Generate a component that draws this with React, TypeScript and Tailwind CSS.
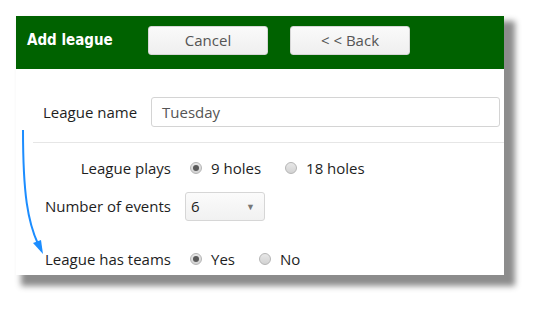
import React from 'react';

const BODY_FONT = { fontFamily: '"Open Sans", "Segoe UI", sans-serif' };

function Radio({ checked, label, className = '' }: { checked?: boolean; label: string; className?: string }) {
  return (
    <span className={`flex items-center ${className}`}>
      <span className="w-[12px] h-[12px] rounded-full border border-[#b5b5b5] bg-gradient-to-b from-[#e8e8e8] to-[#d2d2d2] flex items-center justify-center">
        {checked && <span className="w-[6px] h-[6px] rounded-full bg-[#5a5a5a]" />}
      </span>
      <span className="ml-[9px] text-[15px] text-[#1e1e1e]">{label}</span>
    </span>
  );
}

function HeaderButton({ children, className = '' }: { children: React.ReactNode; className?: string }) {
  return (
    <button className={`w-[120px] h-[29px] rounded-[3px] border border-[#d6d6d6] bg-gradient-to-b from-[#fafafa] to-[#efefef] text-[15px] text-[#555] ${className}`}>
      {children}
    </button>
  );
}

export default function App() {
  return (
    <div className="relative w-[538px] h-[309px] bg-white overflow-hidden" style={BODY_FONT}>
      <div className="ml-[16px] mt-[16px] w-[488px] bg-white shadow-[8px_8px_6px_3px_#8c8c8c]">
        {/* header */}
        <div className="h-[53px] bg-[#006200] flex items-start pt-[10px] pl-[11px]">
          <div
            className="h-[29px] flex items-center text-white font-bold text-[15px] w-[121px]"
            style={{ fontFamily: '"DejaVu Sans Condensed", Tahoma, sans-serif' }}
          >
            Add league
          </div>
          <HeaderButton>Cancel</HeaderButton>
          <HeaderButton className="ml-[22px]">&lt; &lt; Back</HeaderButton>
        </div>

        {/* body */}
        <div className="pt-[28px] pb-[6px]">
          <div className="flex items-center pl-[27px] pr-[4px]">
            <span className="text-[15px] text-[#1e1e1e] w-[108px]">League name</span>
            <div className="flex-1 h-[30px] border border-[#d4d4d4] rounded-[3px] flex items-center px-[10px] text-[15px] text-[#555]">
              Tuesday
            </div>
          </div>

          <div className="ml-[17px] mt-[15px] border-t border-[#e6e6e6]" />

          <div className="mt-[15px] h-[20px] flex items-center">
            <span className="w-[155px] text-right text-[15px] text-[#1e1e1e]">League plays</span>
            <Radio checked label="9 holes" className="ml-[19px]" />
            <Radio label="18 holes" className="ml-[24px]" />
          </div>

          <div className="mt-[14px] h-[29px] flex items-center">
            <span className="w-[155px] text-right text-[15px] text-[#1e1e1e]">Number of events</span>
            <div className="ml-[14px] w-[80px] h-[29px] border border-[#d6d6d6] rounded-[3px] bg-gradient-to-b from-[#fbfbfb] to-[#f1f1f1] flex items-center pl-[5px] pr-[9px] text-[15px] text-[#1e1e1e]">
              <span className="flex-1">6</span>
              <span className="text-[9px] text-[#777]">▼</span>
            </div>
          </div>

          <div className="mt-[28px] h-[20px] flex items-center">
            <span className="w-[155px] text-right text-[15px] text-[#1e1e1e]">League has teams</span>
            <Radio checked label="Yes" className="ml-[19px]" />
            <Radio label="No" className="ml-[24px]" />
          </div>
        </div>
      </div>

      {/* annotation arrow */}
      <svg className="absolute left-0 top-0 pointer-events-none" width="538" height="309">
        <path d="M23 130 C 23 195, 28 222, 38 244" fill="none" stroke="#1c8dff" strokeWidth="2" />
        <path d="M43 254 L33 243 L41 240 Z" fill="#1c8dff" />
      </svg>
    </div>
  );
}
